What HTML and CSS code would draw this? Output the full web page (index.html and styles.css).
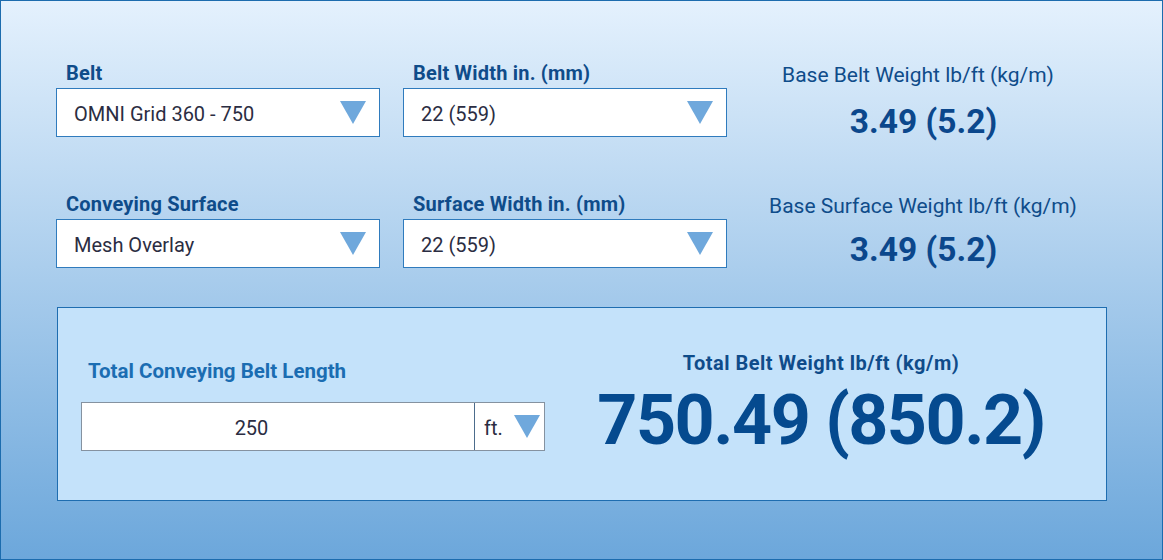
FILE: index.html
```html
<!DOCTYPE html>
<html lang="en">
<head>
<meta charset="utf-8">
<title>Belt Weight Calculator</title>
<link rel="stylesheet" href="styles.css">
</head>
<body>
<div class="page">
  <div class="fields">
    <div class="field">
      <div class="label">Belt</div>
      <div class="select">
        <span class="select-text">OMNI Grid 360 - 750</span>
        <svg class="caret" width="26" height="23" viewBox="0 0 26 23"><polygon points="0,0 26,0 13,23"/></svg>
      </div>
    </div>
    <div class="field">
      <div class="label">Belt Width in. (mm)</div>
      <div class="select">
        <span class="select-text">22 (559)</span>
        <svg class="caret" width="26" height="23" viewBox="0 0 26 23"><polygon points="0,0 26,0 13,23"/></svg>
      </div>
    </div>
    <div class="stat">
      <div class="stat-label">Base Belt Weight lb/ft (kg/m)</div>
      <div class="stat-value">3.49 (5.2)</div>
    </div>

    <div class="field">
      <div class="label">Conveying Surface</div>
      <div class="select">
        <span class="select-text">Mesh Overlay</span>
        <svg class="caret" width="26" height="23" viewBox="0 0 26 23"><polygon points="0,0 26,0 13,23"/></svg>
      </div>
    </div>
    <div class="field">
      <div class="label">Surface Width in. (mm)</div>
      <div class="select">
        <span class="select-text">22 (559)</span>
        <svg class="caret" width="26" height="23" viewBox="0 0 26 23"><polygon points="0,0 26,0 13,23"/></svg>
      </div>
    </div>
    <div class="stat">
      <div class="stat-label stat-label-wide">Base Surface Weight lb/ft (kg/m)</div>
      <div class="stat-value stat-value-tight">3.49 (5.2)</div>
    </div>
  </div>

  <div class="panel">
    <div class="length">
      <div class="length-label">Total Conveying Belt Length</div>
      <div class="length-input">
        <div class="length-value">250</div>
        <div class="unit">
          <span class="unit-text">ft.</span>
          <svg class="caret" width="26" height="23" viewBox="0 0 26 23"><polygon points="0,0 26,0 13,23"/></svg>
        </div>
      </div>
    </div>
    <div class="total">
      <div class="total-label">Total Belt Weight lb/ft (kg/m)</div>
      <div class="total-value">750.49 (850.2)</div>
    </div>
  </div>
</div>
</body>
</html>
```

FILE: styles.css
```css
* { box-sizing: border-box; }

html, body {
  margin: 0;
  padding: 0;
}

body {
  font-family: Roboto, "Liberation Sans", sans-serif;
}

.page {
  width: 1163px;
  height: 560px;
  border: 1px solid #1c6cae;
  background: linear-gradient(to bottom, #e4f1fd 0%, #6ca7db 100%);
  padding: 60px 0 0 55px;
}

.fields {
  display: grid;
  grid-template-columns: 324px 324px 336px;
  grid-template-rows: 76px 76px;
  column-gap: 23px;
  row-gap: 55px;
}

.field {
  display: flex;
  flex-direction: column;
}

.label {
  height: 27px;
  padding: 0 0 0 10px;
  font-size: 20px;
  line-height: 24px;
  font-weight: 700;
  color: #0f4c8a;
  letter-spacing: 0.2px;
}

.select {
  height: 49px;
  background: #fff;
  border: 1px solid #2f7bbd;
  display: flex;
  align-items: center;
  justify-content: space-between;
  padding: 0 13px 0 17px;
}

.select-text {
  padding-top: 2px;
  font-size: 20px;
  color: #2b2d42;
}

.caret polygon { fill: #6fa8dc; }

.caret { display: block; flex: none; }

.stat {
  display: flex;
  flex-direction: column;
  align-items: center;
  padding-top: 2px;
}

.stat-label {
  font-size: 21px;
  line-height: 24px;
  color: #0f4c8a;
}

.stat-label-wide {
  padding-left: 10px;
}

.stat-value {
  margin-top: 16px;
  padding-left: 11px;
  font-size: 33.5px;
  line-height: 38px;
  font-weight: 700;
  color: #0b478c;
}

.stat-value-tight {
  margin-top: 12.5px;
}

.panel {
  margin: 39px 0 0 1px;
  width: 1050px;
  height: 194px;
  background: #c4e2fa;
  border: 1px solid #1e6db0;
  display: flex;
}

.length {
  width: 488px;
  padding: 50px 0 0 23px;
}

.length-label {
  padding-left: 7px;
  font-size: 20.5px;
  line-height: 26px;
  font-weight: 700;
  color: #1b6db2;
}

.length-input {
  margin-top: 18px;
  width: 464px;
  height: 49px;
  background: #fff;
  border: 1px solid #8592a0;
  display: flex;
}

.length-value {
  width: 393px;
  padding: 3px 53px 0 0;
  border-right: 1px solid #4c6c8c;
  display: flex;
  align-items: center;
  justify-content: center;
  font-size: 20px;
  color: #2b2d42;
}

.unit {
  flex: 1;
  display: flex;
  align-items: center;
  justify-content: space-between;
  padding: 0 4px 0 9px;
}

.unit-text {
  padding-top: 3px;
  font-size: 20px;
  color: #2b2d42;
}

.total {
  flex: 1;
  display: flex;
  flex-direction: column;
  align-items: center;
  padding: 43px 10px 0 0;
}

.total-label {
  font-size: 20px;
  line-height: 24px;
  font-weight: 700;
  color: #0f4c8a;
  letter-spacing: 0.5px;
}

.total-value {
  margin-top: 7px;
  font-size: 70px;
  line-height: 76px;
  font-weight: 700;
  color: #054a8f;
  letter-spacing: -1.5px;
}
```
